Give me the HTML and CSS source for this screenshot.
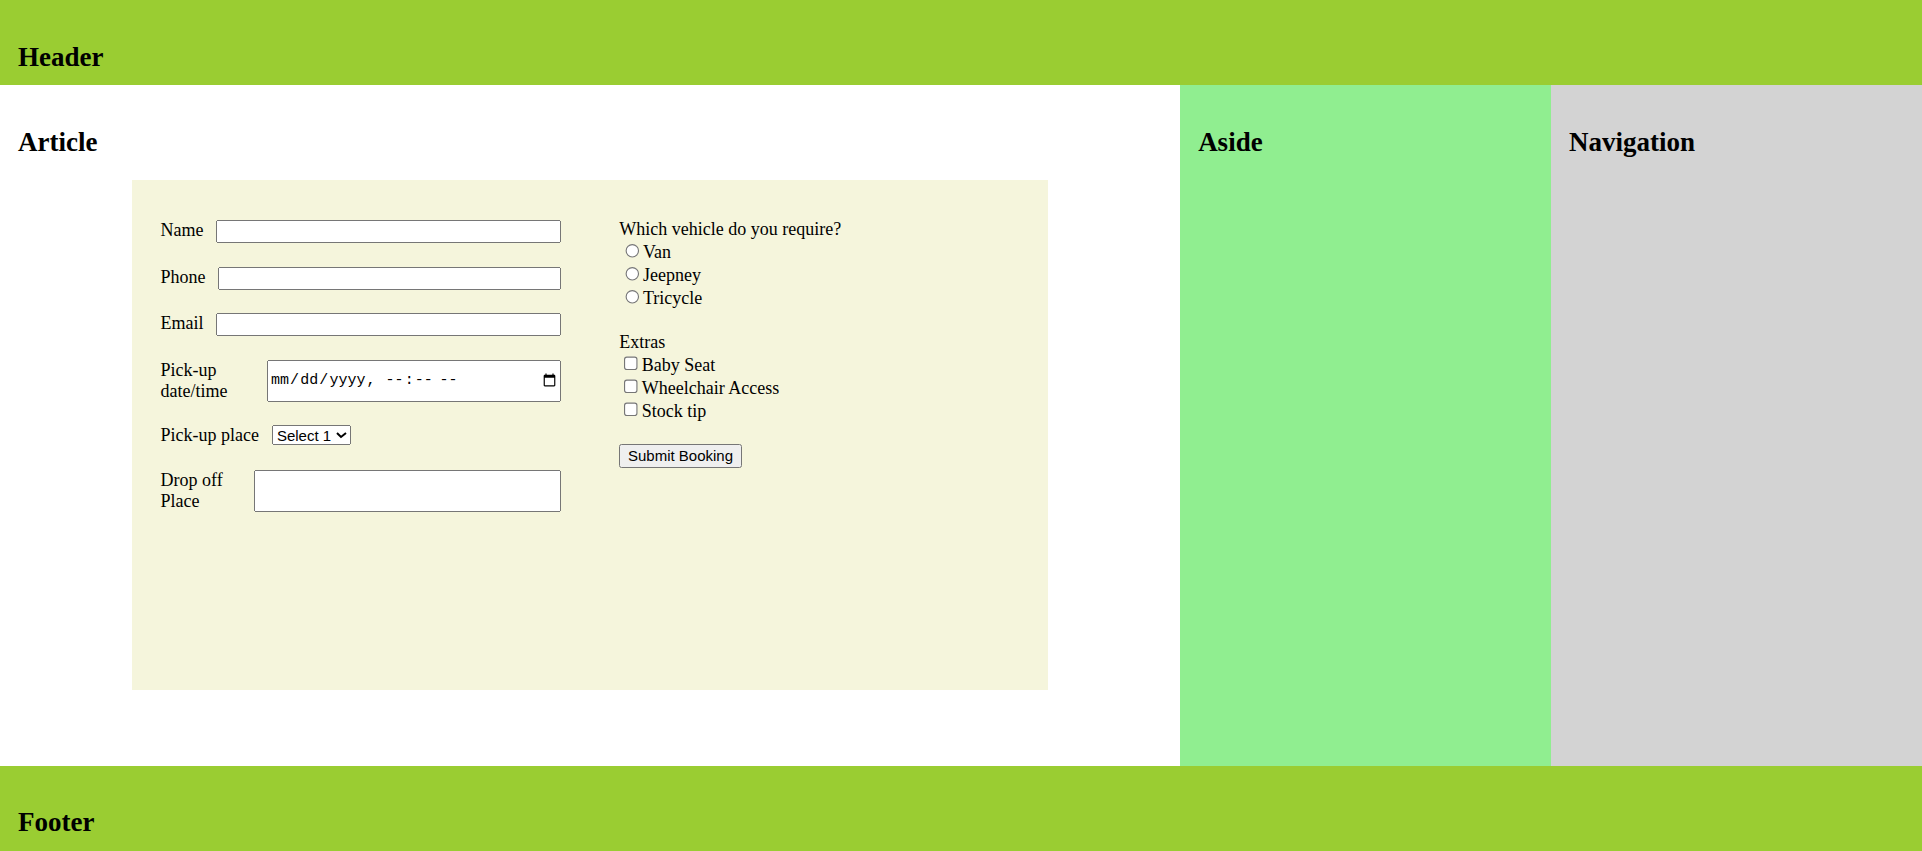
FILE: index.html
```html
<!DOCTYPE html>
<html lang="en">
<head>
<meta charset="utf-8">
<title>Booking</title>
<link rel="stylesheet" href="styles.css">
</head>
<body class="page">
<header class="site-header"><h2 class="block-title">Header</h2></header>
<article class="main"><h2 class="block-title">Article</h2>
<form class="booking">
  <div class="fields">
    <div class="row"><label class="row-label" for="name">Name</label><input id="name" class="field" type="text"></div>
    <div class="row"><label class="row-label" for="phone">Phone</label><input id="phone" class="field" type="tel"></div>
    <div class="row"><label class="row-label" for="email">Email</label><input id="email" class="field" type="email"></div>
    <div class="row"><label class="row-label" for="pickup">Pick-up date/time</label><input id="pickup" class="field date" type="datetime-local"></div>
    <div class="row"><label class="row-label" for="place">Pick-up place</label><select id="place" class="picker"><option>Select 1</option><option>Select 2</option></select></div>
    <div class="row"><label class="row-label" for="drop">Drop off Place</label><input id="drop" class="field" type="text"></div>
  </div>
  <div class="options">
    <div class="group">Which vehicle do you require?<br><label><input type="radio" name="vehicle">Van</label><br><label><input type="radio" name="vehicle">Jeepney</label><br><label><input type="radio" name="vehicle">Tricycle</label></div>
    <div class="group">Extras<br><label><input type="checkbox">Baby Seat</label><br><label><input type="checkbox">Wheelchair Access</label><br><label><input type="checkbox">Stock tip</label></div>
    <button type="submit" class="submit">Submit Booking</button>
  </div>
</form>
</article>
<aside class="side"><h2 class="block-title">Aside</h2></aside>
<nav class="nav"><h2 class="block-title">Navigation</h2></nav>
<footer class="site-footer"><h2 class="block-title">Footer</h2></footer>
</body>
</html>
```
FILE: styles.css
```css
html {
  zoom: 1.125;
}

.page {
  margin: 0;
  display: grid;
  grid-template-columns: minmax(0, 1fr) 19.3% 19.3%;
  grid-template-rows: 75.56px 605.33px 75.56px;
  grid-template-areas:
    "header header header"
    "main side nav"
    "footer footer footer";
  font-family: "Liberation Serif", "Times New Roman", serif;
  font-size: 16px;
  color: #000;
  overflow: hidden;
}

.site-header,
.site-footer,
.main,
.side,
.nav {
  padding: 16px;
  min-width: 0;
}

.site-header { grid-area: header; background: #9acd32; }
.site-footer { grid-area: footer; background: #9acd32; }
.main { grid-area: main; background: #fff; }
.side { grid-area: side; background: #90ee90; }
.nav { grid-area: nav; background: #d3d3d3; }

.block-title {
  font-size: 24px;
  font-weight: bold;
  margin: 20.9px 0 19.92px;
}

.booking {
  box-sizing: border-box;
  width: 80%;
  height: 453.8px;
  margin: 0 auto;
  padding: 35px 25px 0;
  background: #f5f5dc;
  display: grid;
  grid-template-columns: 1fr 1fr;
  column-gap: 52px;
  align-items: start;
}

.fields {
  display: flex;
  flex-direction: column;
  gap: 20.8px;
  padding-top: 0.6px;
  min-width: 0;
}

.row {
  display: flex;
}

.row-label {
  margin-right: 11.5px;
}

.field {
  box-sizing: border-box;
  width: 100%;
  font-family: "Liberation Sans", Arial, sans-serif;
  font-size: 13.333px;
}

.field.date {
  font-family: "Liberation Mono", "Courier New", monospace;
}

.picker {
  align-self: flex-start;
  height: 17.5px;
  font-family: "Liberation Sans", Arial, sans-serif;
  font-size: 13.333px;
}

.group {
  margin-bottom: 20px;
}

.submit {
  font-family: "Liberation Sans", Arial, sans-serif;
  font-size: 13.333px;
}
```
